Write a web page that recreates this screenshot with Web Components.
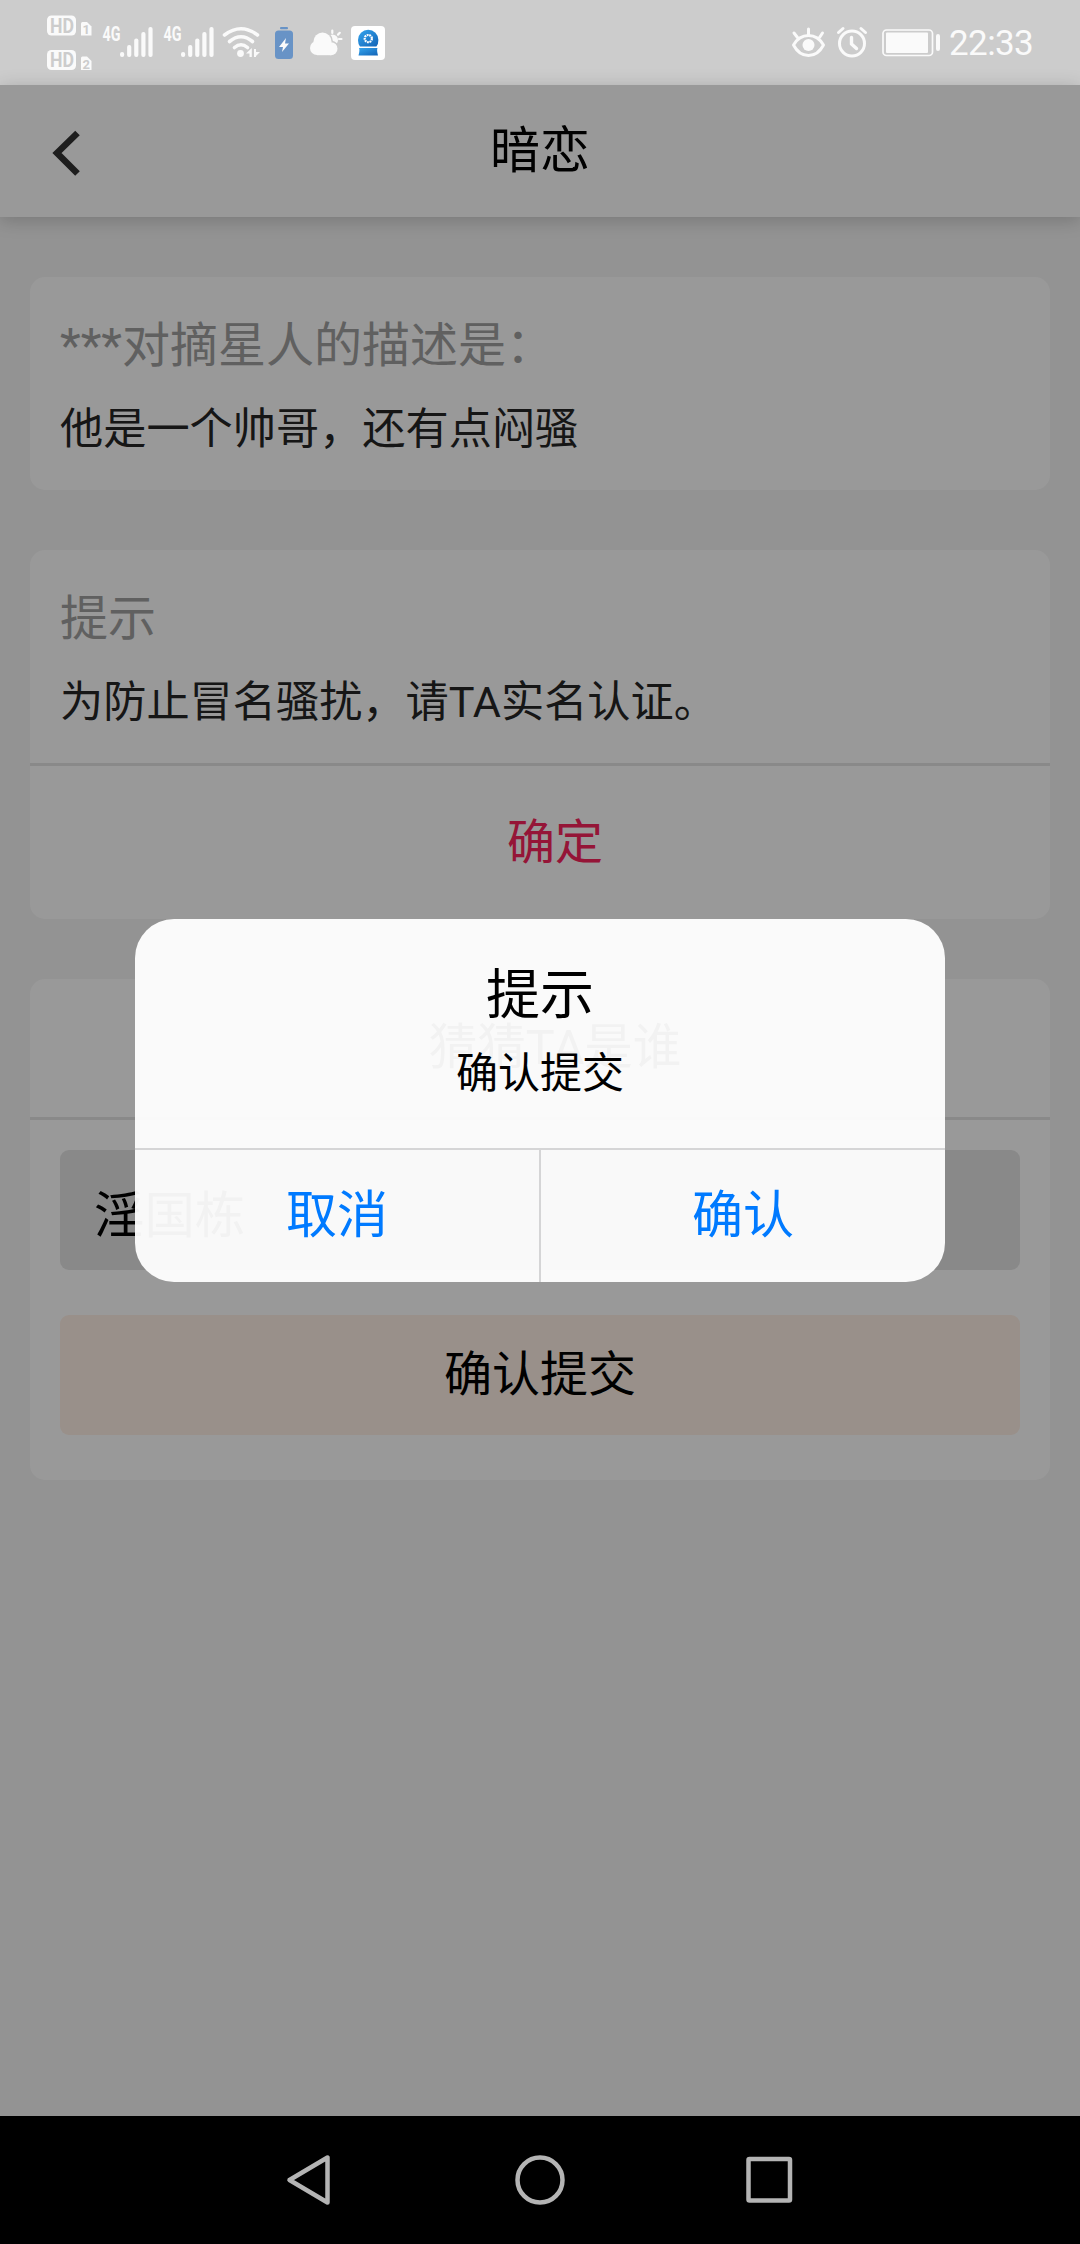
<!DOCTYPE html>
<html lang="zh-CN">
<head>
<meta charset="utf-8">
<title>暗恋</title>
<style>
    html, body {
        margin: 0;
        height: 100%;
        overflow: hidden;
    }
    body {
        font-family: Roboto, "Noto Sans CJK SC", sans-serif;
        background: #f5f5f5;
    }
</style>
</head>
<body>
<phone-screen>
    <status-bar slot="status" time="22:33"></status-bar>
    <nav-header>暗恋</nav-header>
    <info-card style="height:213px">
        <span slot="title">***对摘星人的描述是：</span>
        <span slot="text">他是一个帅哥，还有点闷骚</span>
    </info-card>
    <info-card style="height:369px">
        <span slot="title">提示</span>
        <span slot="text">为防止冒名骚扰，请TA实名认证。</span>
        <span slot="action">确定</span>
    </info-card>
    <guess-form value="淫国栋" button="确认提交">猜猜TA是谁</guess-form>
    <confirm-dialog slot="dialog" cancel="取消" confirm="确认">
        <span slot="title">提示</span>
        确认提交
    </confirm-dialog>
    <system-nav slot="nav"></system-nav>
</phone-screen>

<script>
class PhoneScreen extends HTMLElement {
    constructor() {
        super();
        this.attachShadow({ mode: 'open' });
        this.shadowRoot.innerHTML = `
        <style>
        :host{
            display:flex;
            flex-direction:column;
            width:1080px;
            height:2244px;
        }
        main{
            position:relative;
            flex:1;
            background:#f5f5f5;
        }
        .mask{
            position:absolute;
            inset:0;
            z-index:10;
            background:rgba(0,0,0,.4);
            display:flex;
            justify-content:center;
            align-items:center;
        }
        </style>
        <slot name="status"></slot>
        <main>
            <slot></slot>
            <div class="mask"><slot name="dialog"></slot></div>
        </main>
        <slot name="nav"></slot>
        `;
    }
}

class StatusBar extends HTMLElement {
    constructor() {
        super();
        this.attachShadow({ mode: 'open' });
    }

    connectedCallback() {
        this.shadowRoot.innerHTML = `
        <style>
        :host{
            display:flex;
            justify-content:space-between;
            height:85px;
            background:#ccc;
            color:#fafafa;
        }
        svg{
            display:block;
        }
        .right{
            display:flex;
        }
        .time{
            font-size:35px;
            line-height:85px;
            width:131px;
            letter-spacing:-.6px;
            padding-top:1px;
            box-sizing:border-box;
        }
        text{
            font-family:Roboto, sans-serif;
            font-weight:700;
        }
        </style>
        <svg width="400" height="85" fill="#fafafa">
            ${this._hd(15.5, 1)}
            ${this._hd(50, 2)}
            ${this._signal(102.5)}
            ${this._signal(163.5)}
            <g fill="none" stroke="#fafafa" stroke-width="3.6" stroke-linecap="round">
                <path d="M224.500 35Q241 22.500 257.500 35"/>
                <path d="M229.500 41.500Q241 32 252.500 41.500"/>
                <path d="M234.500 47.500Q241 42 247.500 47.500"/>
            </g>
            <circle cx="240.500" cy="53.500" r="3.400"/>
            <path d="M246 53.500L251.800 48V57H249.500V53.500zM254 49V57H256V56L260 52H256V49z"/>
            <g fill="#6893c6">
                <rect x="280" y="27" width="8" height="2.200" rx="1"/>
                <rect x="275" y="30.500" width="18" height="28.500" rx="3.500"/>
            </g>
            <path d="M286 38L279 47H283L282 52L289 43.500H285z"/>
            <path d="M332.300 30.500V33M325.800 33L327.200 35M339.800 32.800L338 34.600M341.500 39H339" stroke="#fafafa" stroke-width="2.200" stroke-linecap="round"/>
            <circle cx="332.500" cy="40" r="5.500"/>
            <g stroke="#ccc" stroke-width="3">
                <circle cx="322.500" cy="41.500" r="9"/>
                <circle cx="331" cy="48.700" r="6.500"/>
            </g>
            <circle cx="322.500" cy="41.500" r="9"/>
            <circle cx="317" cy="48" r="7"/>
            <circle cx="331" cy="48.700" r="6.500"/>
            <rect x="317" y="42" width="14" height="13.200"/>
            <rect x="351" y="26" width="34" height="34" rx="4" fill="#fff"/>
            <linearGradient id="cam" x1="0" y1="0" x2="1" y2="1">
                <stop offset="0" stop-color="#35a5ee"/>
                <stop offset="1" stop-color="#1263b6"/>
            </linearGradient>
            <path d="M360 46.500Q358 44 358 40A10.200 10.200 0 0 1 378.400 40Q378.400 44 376.400 46.500z" fill="url(#cam)"/>
            <path d="M359 48H377.500Q376.500 50 378 55.500H358.500Q360 50 359 48z" fill="url(#cam)"/>
            <circle cx="368.300" cy="38.600" r="3.600" fill="none" stroke="#fff" stroke-width="2.200" stroke-dasharray="1.800 .7"/>
        </svg>
        <div class="right">
            <svg width="180" height="85" viewBox="769 0 180 85" fill="none" stroke="#fafafa" stroke-width="3" stroke-linecap="round" stroke-linejoin="round">
                <path d="M793.500 45Q799 35.500 808.500 35.500T823.500 45Q818 55.500 808.500 55.500T793.500 45z"/>
                <circle cx="808.500" cy="45" r="6" fill="#fafafa" stroke="none"/>
                <path d="M808.500 29V35M794 33L797.500 37.500M822.500 33L819.500 37.500"/>
                <circle cx="852" cy="43.500" r="12.500"/>
                <path d="M851.500 37.500V44L856.500 48.500" stroke-width="3.400"/>
                <path d="M838.500 32.500L843 28.500M865.500 32.500L861 28.500"/>
                <rect x="883" y="30" width="49.500" height="25.500" rx="3.500" stroke-width="1.700"/>
                <rect x="886" y="32.500" width="42" height="20.500" rx="1" fill="#fafafa" stroke="none"/>
                <path d="M938 36V49" stroke-width="4"/>
            </svg>
            <div class="time">${this.getAttribute('time') || ''}</div>
        </div>
        `;
    }

    // HD badge with its sim card number
    _hd(y, n) {
        return `
            <rect x="47" y="${y}" width="29" height="20" rx="4.500"/>
            <text x="50" y="${y + 17}" font-size="19.500" textLength="24" lengthAdjust="spacingAndGlyphs" fill="#ccc">HD</text>
            <path d="M81 ${y + 8}a1.500 1.500 0 0 1 1.500-1.500H87L91.500 ${y + 11}V${y + 20}H81z"/>
            <text x="82.600" y="${y + 18.5}" font-size="13" fill="#ccc">${n}</text>
        `;
    }

    _signal(x) {
        const bars = [5, 12, 18.500, 25, 30];
        return `
            <text x="${x}" y="41" font-size="19.500" textLength="18" lengthAdjust="spacingAndGlyphs">4G</text>
            ${bars.map((h, i) => `<rect x="${x + 17.5 + i * 7.1}" y="${57 - h}" width="4.200" height="${h}" rx="2"/>`).join('')}
        `;
    }
}

class NavHeader extends HTMLElement {
    constructor() {
        super();
        this.attachShadow({ mode: 'open' });
        this.shadowRoot.innerHTML = `
        <style>
        :host{
            display:grid;
            grid-template-columns:132px 1fr 132px;
            align-items:center;
            height:132px;
            background:#fff;
            box-shadow:0 3px 18px rgba(0,0,0,.2);
            font-size:50px;
            color:#000;
        }
        .title{
            text-align:center;
            line-height:132px;
            height:136px;
        }
        </style>
        <svg width="132" height="132" fill="none" stroke="#333" stroke-width="6.500">
            <path d="M77.500 46.500L57 66.500L77.500 87" transform="translate(0 -.5)"/>
        </svg>
        <div class="title"><slot></slot></div>
        `;
    }
}

class InfoCard extends HTMLElement {
    constructor() {
        super();
        this.attachShadow({ mode: 'open' });
        this.shadowRoot.innerHTML = `
        <style>
        :host{
            display:flex;
            flex-direction:column;
            box-sizing:border-box;
            margin:60px 30px 0;
            background:#fff;
            border-radius:15px;
        }
        .body{
            height:213px;
            box-sizing:border-box;
            padding:33px 30px 0;
        }
        .title{
            font-size:48px;
            line-height:72px;
            color:#a0a0a0;
        }
        .text{
            font-size:43.2px;
            line-height:65px;
            margin-top:15px;
            color:#262626;
        }
        .action{
            flex:1;
            display:none;
            align-items:center;
            justify-content:center;
            border-top:3px solid #e5e5e5;
            padding:0 0 9px 30px;
            font-size:48px;
            color:#f8245c;
        }
        </style>
        <div class="body">
            <div class="title"><slot name="title"></slot></div>
            <div class="text"><slot name="text"></slot></div>
        </div>
        <div class="action"><slot name="action"></slot></div>
        `;
    }

    connectedCallback() {
        if (this.querySelector('[slot=action]')) {
            this.shadowRoot.querySelector('.action').style.display = 'flex';
        }
    }
}

class GuessForm extends HTMLElement {
    constructor() {
        super();
        this.attachShadow({ mode: 'open' });
    }

    connectedCallback() {
        this.shadowRoot.innerHTML = `
        <style>
        :host{
            display:block;
            height:501px;
            margin:60px 30px 0;
            background:#fff;
            border-radius:15px;
            font-size:48px;
        }
        .title{
            height:138px;
            line-height:137px;
            padding-left:30px;
            text-align:center;
            font-size:48.5px;
            color:#000;
            border-bottom:3px solid #e5e5e5;
        }
        .field, .submit{
            margin:30px 30px 0;
            height:120px;
            line-height:120px;
            border-radius:9px;
            color:#000;
        }
        .field{
            padding-left:34px;
            background:#e5e5e5;
            font-size:50.4px;
            line-height:131px;
        }
        .submit{
            margin-top:45px;
            background:#fff0e6;
            text-align:center;
        }
        </style>
        <div class="title"><slot></slot></div>
        <div class="field">${this.getAttribute('value')}</div>
        <div class="submit">${this.getAttribute('button')}</div>
        `;
    }
}

class ConfirmDialog extends HTMLElement {
    constructor() {
        super();
        this.attachShadow({ mode: 'open' });
    }

    connectedCallback() {
        this.shadowRoot.innerHTML = `
        <style>
        :host{
            display:flex;
            flex-direction:column;
            width:810px;
            height:363px;
            overflow:hidden;
            border-radius:39px;
            background:rgba(255,255,255,.95);
            color:#000;
            text-align:center;
        }
        .title{
            padding-top:36px;
            font-size:54px;
            line-height:81px;
        }
        .text{
            flex:1;
            font-size:42px;
            line-height:75px;
        }
        .buttons{
            display:flex;
            height:132px;
            border-top:2px solid #d5d5d6;
            font-size:51px;
            line-height:132px;
            color:#007aff;
        }
        .buttons div{
            flex:1;
        }
        .buttons div:first-child{
            box-sizing:border-box;
            border-right:2px solid #d5d5d6;
        }
        </style>
        <div class="title"><slot name="title"></slot></div>
        <div class="text"><slot></slot></div>
        <div class="buttons">
            <div>${this.getAttribute('cancel')}</div>
            <div>${this.getAttribute('confirm')}</div>
        </div>
        `;
    }
}

class SystemNav extends HTMLElement {
    constructor() {
        super();
        this.attachShadow({ mode: 'open' });
        this.shadowRoot.innerHTML = `
        <style>
        :host{
            display:flex;
            align-items:center;
            justify-content:center;
            gap:170px;
            height:128px;
            background:#000;
        }
        svg{
            fill:none;
            stroke:#b4b4b4;
            stroke-width:4.5;
            stroke-linejoin:round;
        }
        </style>
        <svg width="60" height="60"><path d="M9.500 30L47.500 7.500V52.500z"/></svg>
        <svg width="60" height="60"><circle cx="30" cy="30" r="22.500"/></svg>
        <svg width="60" height="60"><rect x="8.500" y="9" width="41.500" height="41.500" rx="1"/></svg>
        `;
    }
}

customElements.define('phone-screen', PhoneScreen);
customElements.define('status-bar', StatusBar);
customElements.define('nav-header', NavHeader);
customElements.define('info-card', InfoCard);
customElements.define('guess-form', GuessForm);
customElements.define('confirm-dialog', ConfirmDialog);
customElements.define('system-nav', SystemNav);
</script>
</body>
</html>
